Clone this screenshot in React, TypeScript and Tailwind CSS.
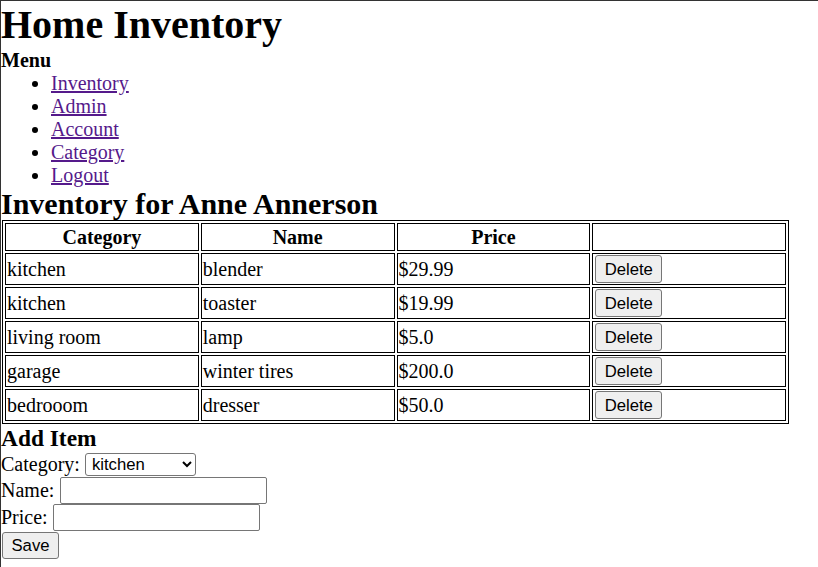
const items = [
  { category: 'kitchen', name: 'blender', price: '$29.99' },
  { category: 'kitchen', name: 'toaster', price: '$19.99' },
  { category: 'living room', name: 'lamp', price: '$5.0' },
  { category: 'garage', name: 'winter tires', price: '$200.0' },
  { category: 'bedrooom', name: 'dresser', price: '$50.0' }
];

const links = ['Inventory', 'Admin', 'Account', 'Category', 'Logout'];

const controlFont = "font-['Liberation_Sans',Arial,sans-serif] text-[16.7px]";

export default function App() {
  return (
    <div className="min-h-[567px] w-[818px] border-l border-t border-[#333] bg-white font-['Liberation_Serif','Times_New_Roman',serif] text-[20px] leading-[23px] text-black">
      <h1 className="text-[40px] leading-[48px] font-bold">Home Inventory</h1>
      <h4 className="font-bold">Menu</h4>
      <ul className="list-disc pl-[50px]">
        {links.map((link) => (
          <li key={link}>
            <a href="#" className="text-[#551a8b] underline">
              {link}
            </a>
          </li>
        ))}
      </ul>

      <h2 className="text-[30px] leading-[33px] font-bold">Inventory for Anne Annerson</h2>
      <table className="ml-px w-[787px] table-fixed border-separate border-spacing-[2px] border border-black">
        <thead>
          <tr>
            <th className="h-[28px] border border-black p-px text-center font-bold">Category</th>
            <th className="border border-black p-px text-center font-bold">Name</th>
            <th className="border border-black p-px text-center font-bold">Price</th>
            <th className="border border-black p-px"></th>
          </tr>
        </thead>
        <tbody>
          {items.map((item) => (
            <tr key={item.name}>
              <td className="h-[32px] border border-black p-px">{item.category}</td>
              <td className="border border-black p-px">{item.name}</td>
              <td className="border border-black p-px">{item.price}</td>
              <td className="border border-black p-px">
                <button
                  className={`${controlFont} ml-px flex h-[28px] w-[67px] items-center justify-center rounded-[3px] border border-[#767676] bg-[#efefef] text-black`}
                >
                  Delete
                </button>
              </td>
            </tr>
          ))}
        </tbody>
      </table>

      <form className="flex flex-col">
        <h3 className="text-[23.4px] leading-[28px] font-bold">Add Item</h3>
        <div className="flex h-[24px] items-center">
          <span>Category:</span>
          <select
            defaultValue="kitchen"
            className={`${controlFont} ml-[5px] h-[23px] w-[111px] rounded-[3px] border border-[#767676] bg-white pl-[2px] leading-[19px] text-black`}
          >
            <option>kitchen</option>
            <option>living room</option>
            <option>garage</option>
            <option>bedrooom</option>
          </select>
        </div>
        <div className="flex h-[28px] items-center">
          <span>Name:</span>
          <input
            type="text"
            className={`${controlFont} ml-[6px] h-[27px] w-[207px] rounded-[2px] border border-[#767676] bg-white px-[2px]`}
          />
        </div>
        <div className="flex h-[27px] items-center">
          <span>Price:</span>
          <input
            type="text"
            className={`${controlFont} ml-[5px] h-[27px] w-[207px] rounded-[2px] border border-[#767676] bg-white px-[2px]`}
          />
        </div>
        <div className="flex h-[28px] items-center">
          <button
            type="button"
            className={`${controlFont} ml-px flex h-[27px] w-[57px] items-center justify-center rounded-[3px] border border-[#767676] bg-[#efefef] text-black`}
          >
            Save
          </button>
        </div>
      </form>
    </div>
  );
}
